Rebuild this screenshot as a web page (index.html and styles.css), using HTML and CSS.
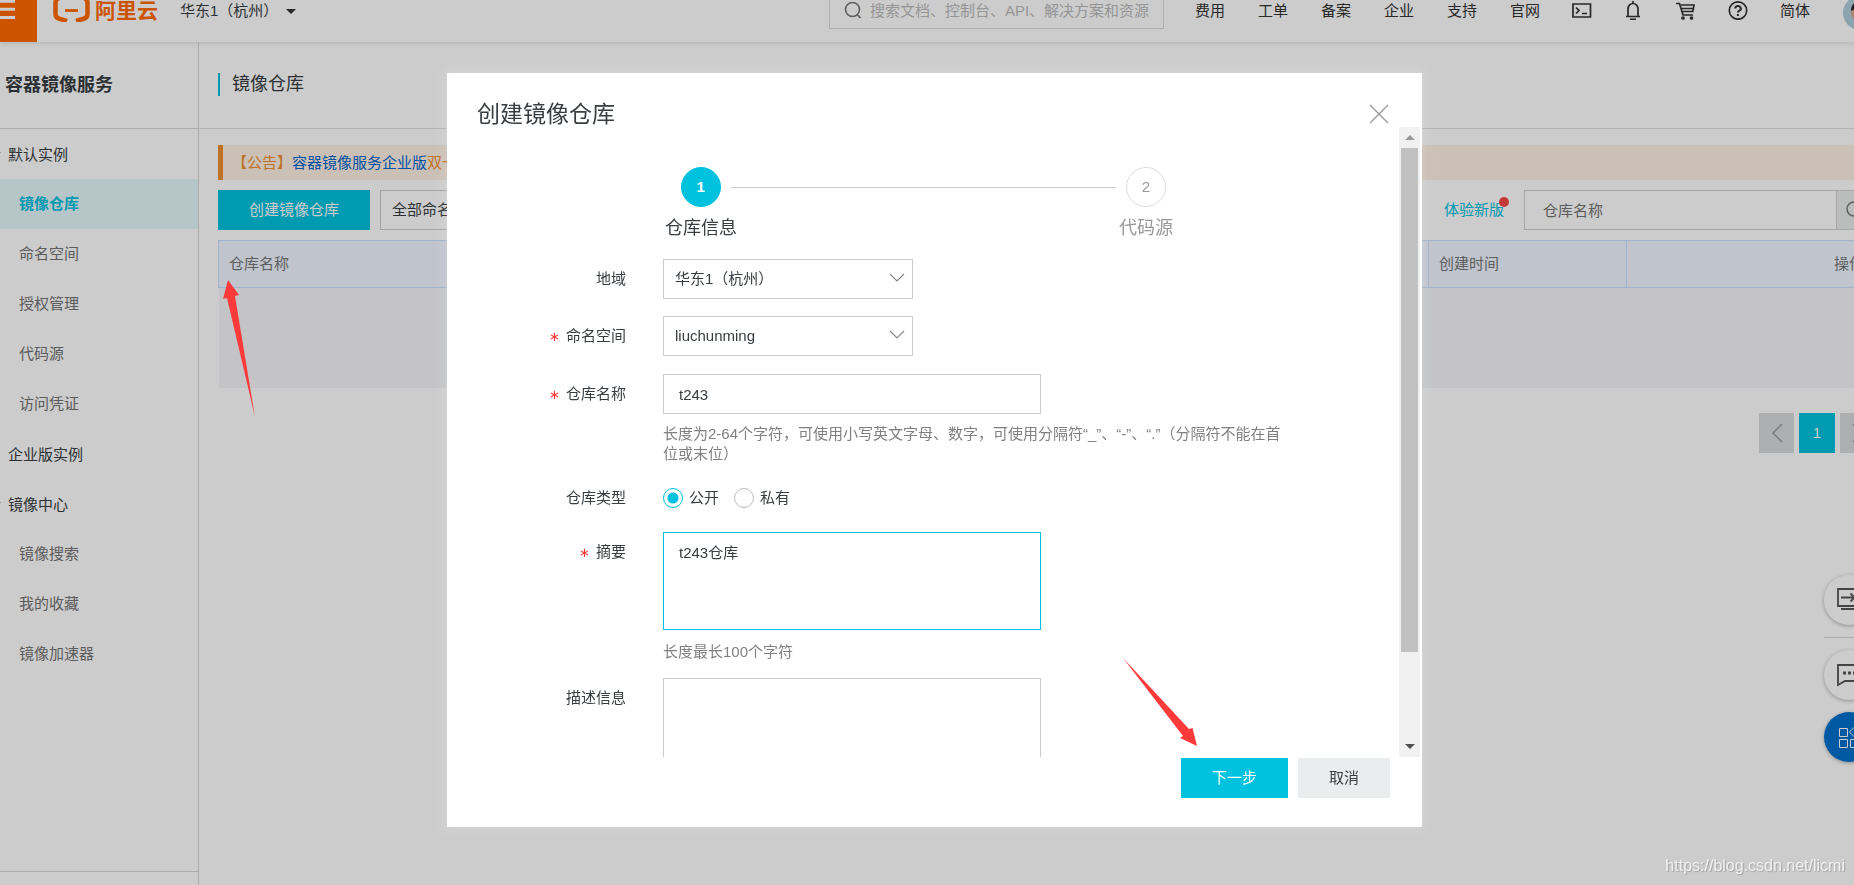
FILE: index.html
```html
<!DOCTYPE html>
<html lang="zh-CN">
<head>
<meta charset="utf-8">
<title>容器镜像服务</title>
<link rel="stylesheet" href="styles.css">
</head>
<body>
<div class="page">
  <header class="topbar">
    <button class="menu-btn" aria-label="菜单">
      <svg width="37" height="42" viewBox="0 0 37 42"><path d="M0 1.2h15M0 9.3h15M0 17.5h15" stroke="#fff" stroke-width="3"/></svg>
    </button>
    <a class="brand" href="#">
      <svg width="38" height="22" viewBox="0 0 38 22" fill="none" stroke="#ff6a00" stroke-width="4.5"><path d="M15 -3 H9 Q2.500 -2 2.500 3 V14 Q2.500 18 7 19 L14 21"/><path d="M22 -3 H28 Q34.500 -2 34.500 3 V14 Q34.500 18 30 19 L23 21"/><path d="M12 10.5h13" stroke-width="2.8"/></svg>
      <span>阿里云</span>
    </a>
    <button class="region">华东1（杭州）<i class="caret"></i></button>
    <label class="global-search">
      <svg width="18" height="18" viewBox="0 0 18 18" fill="none" stroke="#777" stroke-width="1.6"><circle cx="8.5" cy="8.5" r="7"/><path d="M13 13.5l3.500 3.500"/></svg>
      <input type="text" placeholder="搜索文档、控制台、API、解决方案和资源">
    </label>
    <nav class="top-links">
      <a href="#">费用</a><a href="#">工单</a><a href="#">备案</a><a href="#">企业</a><a href="#">支持</a><a href="#">官网</a>
    </nav>
    <nav class="top-icons">
      <svg viewBox="0 0 20 20" width="20" height="20"><path d="M1 4h17.500v13H1z"/><path d="M4 7.500l3 3-3 3M10 13.500h5"/></svg>
      <svg viewBox="0 0 20 20" width="20" height="20"><path d="M2 16.500h14M4 16V9a5 5.500 0 0 1 10 0v7M9 1v2.500M6 19.300h6"/></svg>
      <svg viewBox="0 0 20 20" width="20" height="20"><path d="M0 3.500h3.500l3.500 11.500h10M5 5h13l-1.200 6.500H6.500M5.500 8.500h12"/><circle cx="7" cy="18" r="1"/><circle cx="15.500" cy="18" r="1"/></svg>
      <svg viewBox="0 0 20 20" width="20" height="20"><circle cx="10" cy="10.500" r="8.700"/><path d="M7.200 8.500a2.800 2.500 0 1 1 4.200 2.100q-1.500.8-1.500 2M9.900 14v2" stroke-width="2"/></svg>
    </nav>
    <a class="lang" href="#">简体</a>
    <svg class="avatar" width="34" height="34" viewBox="0 0 34 34"><circle cx="17" cy="17" r="17" fill="#afcddd"/><circle cx="17" cy="17" r="9" fill="#d9a68d"/><path d="M8 15q0-9 9-9t9 9q-9-5-18 0" fill="#2b2022"/></svg>
  </header>

  <div class="columns">
    <aside class="sidebar">
      <h2 class="side-title">容器镜像服务</h2>
      <nav class="side-nav">
        <a class="group open" href="#">默认实例</a>
        <a class="active" href="#">镜像仓库</a>
        <a href="#">命名空间</a>
        <a href="#">授权管理</a>
        <a href="#">代码源</a>
        <a href="#">访问凭证</a>
        <a class="group" href="#">企业版实例</a>
        <a class="group open" href="#">镜像中心</a>
        <a href="#">镜像搜索</a>
        <a href="#">我的收藏</a>
        <a href="#">镜像加速器</a>
      </nav>
      <div class="side-foot"></div>
    </aside>

    <main class="main">
      <div class="main-head"><h1>镜像仓库</h1></div>
      <div class="content">
        <p class="notice">【公告】<a href="#">容器镜像服务企业版</a>双十一优惠</p>
        <div class="toolbar">
          <button class="btn primary create">创建镜像仓库</button>
          <select class="ns-filter" aria-label="命名空间"><option>全部命名空间</option></select>
          <a class="try-new" href="#">体验新版<i class="dot"></i></a>
          <div class="repo-search">
            <input type="text" placeholder="仓库名称" aria-label="仓库名称">
            <button aria-label="搜索"><svg width="18" height="18" viewBox="0 0 18 18" fill="none" stroke="#777" stroke-width="1.500"><circle cx="8" cy="8" r="7"/><path d="M13 13l4 4"/></svg></button>
          </div>
        </div>
        <table class="repos">
          <thead><tr><th>仓库名称</th><th class="time">创建时间</th><th class="ops">操作</th></tr></thead>
          <tbody><tr><td colspan="3"></td></tr></tbody>
        </table>
        <nav class="pager">
          <button aria-label="上一页"><svg width="12" height="20" viewBox="0 0 12 20"><path d="M11 1L2 10l9 9"/></svg></button>
          <button class="current">1</button>
          <button aria-label="下一页"><svg width="12" height="20" viewBox="0 0 12 20"><path d="M1 1l9 9-9 9"/></svg></button>
        </nav>
      </div>
    </main>
  </div>
</div>

<div class="float-tools">
  <button aria-label="控制台"><svg width="26" height="24" viewBox="0 0 26 24"><path d="M2 1h22v17H2zM5 21h16M5 9.500h13M14.500 5.500l4 4-4 4"/></svg></button>
  <hr>
  <button aria-label="咨询"><svg width="26" height="24" viewBox="0 0 26 24"><path d="M2 2h22v16H9l-7 4z"/><path d="M7 10h3M12 10h3M17 10h3" stroke-width="3"/></svg></button>
  <button class="blue" aria-label="工具"><svg width="26" height="24" viewBox="0 0 26 24"><path d="M3.500 3.500h8v8h-8zM3.500 14.500h8v8h-8zM14.500 14.500h8v8h-8zM18.500 2l5 5-5 5-5-5z"/></svg></button>
</div>

<div class="overlay">
  <section class="modal" role="dialog" aria-labelledby="dlg-title">
    <header class="modal-head">
      <h2 id="dlg-title">创建镜像仓库</h2>
      <button aria-label="关闭"><svg width="20" height="20" viewBox="0 0 20 20"><path d="M1 1l18 18M19 1L1 19" stroke="#999" stroke-width="1.300"/></svg></button>
    </header>
    <div class="modal-body">
      <div class="scroll">
        <ol class="steps">
          <li class="step on"><b>1</b><span>仓库信息</span></li>
          <li class="line"></li>
          <li class="step"><b>2</b><span>代码源</span></li>
        </ol>
        <form class="form">
          <div class="row">
            <label class="lbl" for="region">地域</label>
            <div class="field"><div class="select"><select id="region"><option>华东1（杭州）</option></select><svg width="16" height="10" viewBox="0 0 16 10"><path d="M1 1l7 7 7-7"/></svg></div></div>
          </div>
          <div class="row">
            <label class="lbl req" for="ns">命名空间</label>
            <div class="field"><div class="select"><select id="ns"><option>liuchunming</option></select><svg width="16" height="10" viewBox="0 0 16 10"><path d="M1 1l7 7 7-7"/></svg></div></div>
          </div>
          <div class="row">
            <label class="lbl req" for="name">仓库名称</label>
            <div class="field"><input class="text" id="name" type="text" value="t243"><p class="help">长度为2-64个字符，可使用小写英文字母、数字，可使用分隔符“_”、“-”、“.”（分隔符不能在首位或末位）</p></div>
          </div>
          <div class="row">
            <span class="lbl short">仓库类型</span>
            <div class="field radios">
              <label><input type="radio" name="type" checked>公开</label>
              <label><input type="radio" name="type">私有</label>
            </div>
          </div>
          <div class="row">
            <label class="lbl req" for="summary">摘要</label>
            <div class="field"><textarea class="text focus" id="summary">t243仓库</textarea><p class="help far">长度最长100个字符</p></div>
          </div>
          <div class="row">
            <label class="lbl" for="desc">描述信息</label>
            <div class="field"><textarea class="text" id="desc"></textarea></div>
          </div>
        </form>
      </div>
      <div class="scrollbar"><i class="up"></i><i class="thumb"></i><i class="rest"></i><i class="down"></i></div>
    </div>
    <footer class="modal-foot">
      <button class="btn primary">下一步</button>
      <button class="btn">取消</button>
    </footer>
  </section>
</div>

<svg class="arrow first" width="34" height="138" viewBox="0 0 34 138"><path d="M6 0L17 15l-4 1 20 121L5 18l-4 1z"/></svg>
<svg class="arrow second" width="75" height="89" viewBox="0 0 75 89"><path d="M0 0L66 71l3.500-1 4.500 18-17-8 3-2z"/></svg>
<div class="watermark">https://blog.csdn.net/licmi</div>
</body>
</html>
```
FILE: styles.css
```css
* { box-sizing: border-box; }
body, h1, h2, p, ol { margin: 0; padding: 0; }
body, button, input, select, textarea {
  font: 15px/20px "Liberation Sans", "Noto Sans CJK SC", sans-serif;
  color: #373d41;
  text-spacing-trim: space-all;
}
body { background: #fff; overflow: hidden; }
a { color: inherit; text-decoration: none; }
button { border: 0; padding: 0; background: none; }
h1, h2 { font-weight: 400; }
input, textarea, select { border-radius: 0; outline: 0; }
select { appearance: none; }
svg { display: block; flex: none; }

.page { display: flex; flex-direction: column; height: 100vh; }

/* top bar */
.topbar {
  position: relative;
  display: flex;
  align-items: flex-start;
  height: 42px;
  margin-right: -23px;
  background: #fff;
  box-shadow: 0 1px 5px rgba(0, 0, 0, .12);
  color: #333;
}
.menu-btn { background: #ff6a00; }
.brand { display: flex; gap: 4px; margin-left: 16px; color: #ff6a00; }
.brand span { font-size: 21px; font-weight: 700; line-height: 22px; }
.region { display: flex; align-items: center; gap: 8px; margin-left: 22px; line-height: 22px; }
.caret { border: 5px solid transparent; border-top-color: #333; border-bottom: 0; }
.global-search {
  display: flex;
  align-items: flex-start;
  gap: 8px;
  width: 335px;
  height: 29px;
  margin-left: auto;
  padding: 1px 14px;
  border: 1px solid #ddd;
  border-top: 0;
}
.global-search input { flex: 1; min-width: 0; border: 0; padding: 0; background: none; }
.global-search input::placeholder { color: #bbb; }
.top-links { display: flex; gap: 33px; margin: 0 32px 0 31px; line-height: 22px; }
.top-icons { display: flex; gap: 32px; }
.top-icons svg { fill: none; stroke: #333; stroke-width: 1.700; }
.lang { margin: 0 33px 0 32px; line-height: 22px; }
.avatar { margin-top: -4px; }

/* sidebar */
.columns { display: flex; flex: 1; min-height: 0; }
.sidebar { display: flex; flex-direction: column; width: 199px; border-right: 1px solid #d8d8d8; }
.side-title {
  height: 87px;
  padding-left: 5px;
  border-bottom: 1px solid #d8d8d8;
  font-size: 18px;
  font-weight: 700;
  line-height: 86px;
}
.side-nav { display: flex; flex: 1; flex-direction: column; }
.side-nav a { height: 50px; padding-left: 19px; color: #737373; line-height: 49px; }
.side-nav .group { display: flex; align-items: center; padding-left: 8px; color: #373d41; }
.side-nav .open::before {
  content: "";
  margin: 0 7px 0 -13px;
  border: 3px solid transparent;
  border-top: 4px solid #999;
  border-bottom: 0;
}
.side-nav .active { background: #e4f7fb; color: #00c1de; font-weight: 700; }
.side-foot { height: 14px; border-top: 1px solid #d8d8d8; }

/* main area */
.main { flex: 1; min-width: 0; margin-right: -21px; }
.main-head { height: 87px; padding: 31px 19px 0; border-bottom: 1px solid #e0e0e0; }
.main-head h1 { padding-left: 12px; border-left: 2px solid #00c1de; font-size: 18px; line-height: 23px; }
.content { display: flex; flex-direction: column; padding: 16px 0 0 19px; }
.notice { padding-left: 9px; border-left: 5px solid #f08f2d; background: #fdf0e4; color: #f08f2d; line-height: 35px; }
.notice a { color: #0066cc; }
.btn { height: 40px; padding: 0 31px; background: #eaeded; }
.btn.primary { background: #00c1de; color: #fff; }
.toolbar { display: flex; align-items: center; margin: 10px 0; }
.btn.create { width: 152px; margin-right: 10px; }
.ns-filter { width: 200px; height: 40px; padding: 0 11px; border: 1px solid #ccc; background: #fff; }
.try-new { position: relative; margin: 0 20px 0 auto; color: #00c1de; }
.dot { position: absolute; top: -3px; right: -5px; width: 10px; height: 10px; border-radius: 50%; background: #f54743; }
.repo-search { display: flex; }
.repo-search input { width: 313px; height: 40px; padding: 0 18px; border: 1px solid #d0d0d0; }
.repo-search input::placeholder { color: #737373; }
.repo-search button { width: 38px; padding-left: 9px; border: 1px solid #d0d0d0; border-left: 0; background: #eaeded; }
.repos { width: 100%; border-collapse: collapse; table-layout: fixed; }
.repos th { height: 47px; padding: 0 10px; border: 1px solid #c8e0ff; background: #f1f5ff; color: #73777a; font-weight: 400; text-align: left; }
.repos .time { width: 198px; }
.repos .ops { width: 248px; text-align: right; }
.repos td { height: 100px; background: #f5f6f8; }
.pager { display: flex; justify-content: flex-end; gap: 5px; margin-top: 25px; }
.pager button { display: flex; align-items: center; justify-content: center; width: 35px; height: 40px; background: #d9dbdd; }
.pager svg { fill: none; stroke: #999; stroke-width: 1.500; }
.pager .current { width: 36px; background: #00c1de; color: #fff; }

/* floating tools at the window edge */
.float-tools { position: fixed; top: 575px; right: -20px; display: flex; flex-direction: column; gap: 12px; width: 50px; }
.float-tools button { display: flex; align-items: center; justify-content: center; width: 50px; height: 50px; border-radius: 50%; background: #fff; box-shadow: 0 1px 4px rgba(0, 0, 0, .3); }
.float-tools svg { fill: none; stroke: #555; stroke-width: 1.800; }
.float-tools hr { width: 100%; margin: 0; border: 0; border-top: 1px solid #d8d8d8; }
.float-tools .blue { background: #0070cc; }
.float-tools .blue svg { stroke: #fff; stroke-width: 1; }

/* dialog */
.overlay {
  position: fixed;
  inset: 0;
  display: flex;
  justify-content: center;
  padding: 73px 0 58px 15px;
  background: rgba(0, 0, 0, .2);
}
.modal { display: flex; flex-direction: column; width: 975px; background: #fff; box-shadow: 0 0 10px rgba(255, 255, 255, .25); }
.modal-head { display: flex; align-items: flex-end; justify-content: space-between; height: 54px; padding: 0 33px 3px 30px; }
.modal-head h2 { font-size: 23px; line-height: 20px; }
.modal-body { display: flex; flex: 1; min-height: 0; padding-right: 2px; }
.scroll { flex: 1; overflow: hidden; }
.steps { display: flex; width: 505px; margin: 40px 0 20px 224px; list-style: none; }
.step { display: flex; flex-direction: column; align-items: center; gap: 10px; width: 60px; color: #999; font-size: 18px; line-height: 22px; white-space: nowrap; }
.step b { width: 40px; height: 40px; border: 1px solid #ddd; border-radius: 50%; font-size: 15px; font-weight: 400; line-height: 38px; text-align: center; }
.step.on { color: #373d41; }
.step.on b { border-color: #00c1de; background: #00c1de; color: #fff; font-weight: 700; }
.line { flex: 1; height: 1px; margin-top: 20px; background: #ccc; }
.form { display: flex; flex-direction: column; gap: 17px; }
.row { display: flex; gap: 37px; }
.lbl { width: 179px; line-height: 40px; text-align: right; }
.lbl.short { line-height: 34px; }
.req::before { content: "∗"; margin-right: 6px; color: #f33; font-family: "DejaVu Sans", sans-serif; font-size: 13px; }
.field { width: 622px; }
.select { position: relative; width: 250px; }
.select select { display: block; width: 100%; height: 40px; padding: 0 11px; border: 1px solid #ccc; background: #fff; }
.select svg { position: absolute; top: 14px; right: 8px; fill: none; stroke: #888; stroke-width: 1.200; pointer-events: none; }
.text { display: block; width: 378px; height: 40px; padding: 0 15px; border: 1px solid #ccc; background: #fff; }
textarea.text { height: 98px; padding: 10px 15px; resize: none; }
.text.focus { border-color: #00c1de; }
.help { margin-top: 10px; color: #808080; }
.help.far { margin-top: 13px; line-height: 18px; }
.radios { display: flex; align-items: center; gap: 15px; height: 34px; }
.radios label { display: flex; align-items: center; gap: 6px; }
.radios input { appearance: none; width: 20px; height: 20px; margin: 0; border: 1px solid #bbb; border-radius: 50%; }
.radios input:checked { border-color: #00c1de; background: radial-gradient(circle, #00c1de 5px, #fff 6px); }
.scrollbar { display: flex; flex-direction: column; align-items: center; width: 21px; background: #f1f1f1; }
.thumb { flex: 504; width: 17px; background: #c1c1c1; }
.rest { flex: 84; }
.up, .down { display: flex; align-items: center; height: 21px; }
.up::before, .down::before { content: ""; border: 5px solid transparent; }
.up::before { border-top: 0; border-bottom-color: #999; }
.down::before { border-bottom: 0; border-top-color: #505050; }
.modal-foot { display: flex; justify-content: flex-end; gap: 10px; padding: 1px 32px 29px; }

/* annotations */
.arrow { position: fixed; fill: #fd3a3a; }
.arrow.first { top: 280px; left: 222px; }
.arrow.second { top: 658px; left: 1123px; }
.watermark { position: fixed; right: 9px; bottom: 9px; color: rgba(255, 255, 255, .75); font-size: 16px; text-shadow: 1px 1px 1px rgba(0, 0, 0, .2); }
```
